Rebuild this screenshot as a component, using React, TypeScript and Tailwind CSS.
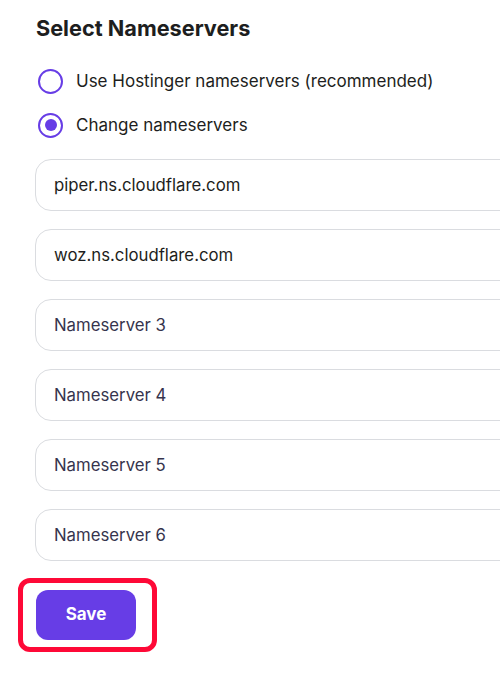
import { useState } from 'react';

const fields = [
  { value: 'piper.ns.cloudflare.com', placeholder: 'Nameserver 1' },
  { value: 'woz.ns.cloudflare.com', placeholder: 'Nameserver 2' },
  { value: '', placeholder: 'Nameserver 3' },
  { value: '', placeholder: 'Nameserver 4' },
  { value: '', placeholder: 'Nameserver 5' },
  { value: '', placeholder: 'Nameserver 6' },
];

function Radio({ checked, label, onClick }: { checked: boolean; label: string; onClick: () => void }) {
  return (
    <button type="button" onClick={onClick} className="flex items-center gap-[13px] text-left">
      <span className="flex h-[25px] w-[25px] shrink-0 items-center justify-center rounded-full border-[2.5px] border-[#673de6]">
        {checked ? <span className="h-[12px] w-[12px] rounded-full bg-[#673de6]" /> : null}
      </span>
      <span className="text-[17px] text-[#1d1e20]">{label}</span>
    </button>
  );
}

export default function App() {
  const [mode, setMode] = useState<'hostinger' | 'custom'>('custom');
  const [values, setValues] = useState(fields.map((f) => f.value));

  return (
    <div className="min-h-screen w-[500px] overflow-hidden bg-white pl-[35px] pt-[14px] font-['Inter',sans-serif]">
      <h2 className="pl-[1px] text-[21.7px] font-bold leading-[28px] text-[#1d1e20]">Select Nameservers</h2>
      <div className="mt-[27px] flex flex-col gap-[18px] pl-[3px]">
        <Radio checked={mode === 'hostinger'} label="Use Hostinger nameservers (recommended)" onClick={() => setMode('hostinger')} />
        <Radio checked={mode === 'custom'} label="Change nameservers" onClick={() => setMode('custom')} />
      </div>
      <div className="mt-[21px] flex w-[520px] flex-col gap-[18px]">
        {fields.map((f, i) => (
          <input
            key={f.placeholder}
            value={values[i]}
            placeholder={f.placeholder}
            onChange={(e) => setValues(values.map((v, j) => (j === i ? e.target.value : v)))}
            className="h-[52px] rounded-[16px] border border-[#dadce0] px-[18px] text-[16.75px] text-[#1d1e20] outline-none placeholder:text-[#36344d]"
          />
        ))}
      </div>
      <div className="mt-[17px] ml-[-17px] inline-flex rounded-[12px] border-[5px] border-[#fe0937] py-[7px] pl-[13px] pr-[16px]">
        <button type="button" className="h-[50px] w-[100px] rounded-[12px] bg-[#673de6] text-[17px] font-bold text-white">
          Save
        </button>
      </div>
    </div>
  );
}
